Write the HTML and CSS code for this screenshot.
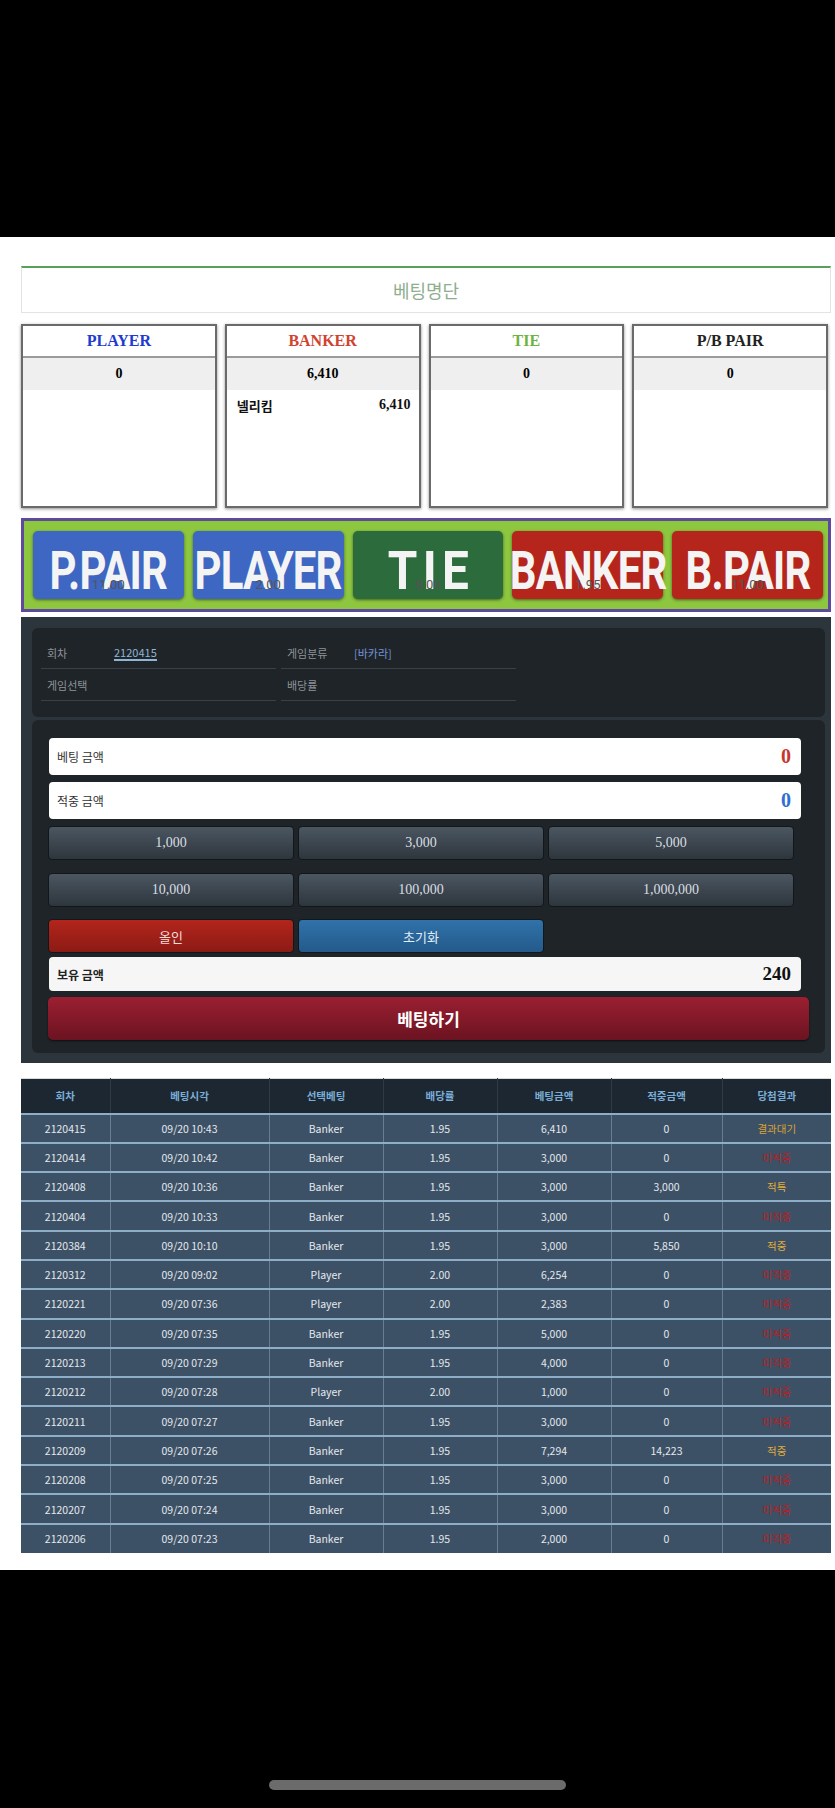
FILE: index.html
```html
<html>

<head>
  <link rel="stylesheet" href="styles.css">
</head>

<body>
  <div class="screen-top"></div>

  <div class="page">
    <div class="title-box">베팅명단</div>

    <div class="pick-boxes">
      <div class="pick-box">
        <div class="pick-head player">PLAYER</div>
        <div class="pick-total">0</div>
        <div class="pick-list"></div>
      </div>
      <div class="pick-box">
        <div class="pick-head banker">BANKER</div>
        <div class="pick-total">6,410</div>
        <div class="pick-list">
          <div class="pick-row"><span>넬리킴</span><b>6,410</b></div>
        </div>
      </div>
      <div class="pick-box">
        <div class="pick-head tie">TIE</div>
        <div class="pick-total">0</div>
        <div class="pick-list"></div>
      </div>
      <div class="pick-box">
        <div class="pick-head">P/B PAIR</div>
        <div class="pick-total">0</div>
        <div class="pick-list"></div>
      </div>
    </div>

    <div class="bet-board">
      <button class="bet-btn blue"><span class="bet-label">P.PAIR</span><span class="odds">11.00</span></button>
      <button class="bet-btn blue"><span class="bet-label">PLAYER</span><span class="odds">2.00</span></button>
      <button class="bet-btn green"><span class="bet-label tie-label">TIE</span><span class="odds">8.00</span></button>
      <button class="bet-btn red"><span class="bet-label">BANKER</span><span class="odds">1.95</span></button>
      <button class="bet-btn red"><span class="bet-label">B.PAIR</span><span class="odds">11.00</span></button>
    </div>

    <div class="bet-area">
      <div class="info-panel">
        <div class="info-grid">
          <div class="info-cell"><span class="info-label">회차</span><span class="round-no">2120415</span></div>
          <div class="info-cell"><span class="info-label">게임분류</span><span class="game-type">[바카라]</span></div>
          <div class="info-cell"><span class="info-label">게임선택</span></div>
          <div class="info-cell"><span class="info-label">배당률</span></div>
        </div>
      </div>

      <div class="slip-panel">
        <div class="amount-box">
          <span>베팅 금액</span><b class="red-num">0</b>
        </div>
        <div class="amount-box">
          <span>적중 금액</span><b class="blue-num">0</b>
        </div>
        <div class="chip-grid">
          <button class="chip">1,000</button>
          <button class="chip">3,000</button>
          <button class="chip">5,000</button>
          <button class="chip">10,000</button>
          <button class="chip">100,000</button>
          <button class="chip">1,000,000</button>
        </div>
        <div class="action-grid">
          <button class="allin">올인</button>
          <button class="reset">초기화</button>
        </div>
        <div class="amount-box balance">
          <b class="balance-label">보유 금액</b><b>240</b>
        </div>
        <button class="submit-bet">베팅하기</button>
      </div>
    </div>

    <table class="history">
      <thead>
        <tr>
          <th>회차</th>
          <th>베팅시각</th>
          <th>선택베팅</th>
          <th>배당률</th>
          <th>베팅금액</th>
          <th>적중금액</th>
          <th>당첨결과</th>
        </tr>
      </thead>
      <tbody id="historyBody"></tbody>
    </table>
  </div>

  <div class="screen-bottom">
    <div class="home-bar"></div>
  </div>

  <script>
    const history = [
      ["2120415", "09/20 10:43", "Banker", "1.95", "6,410", "0", "결과대기", "wait"],
      ["2120414", "09/20 10:42", "Banker", "1.95", "3,000", "0", "미적중", "lose"],
      ["2120408", "09/20 10:36", "Banker", "1.95", "3,000", "3,000", "적특", "win"],
      ["2120404", "09/20 10:33", "Banker", "1.95", "3,000", "0", "미적중", "lose"],
      ["2120384", "09/20 10:10", "Banker", "1.95", "3,000", "5,850", "적중", "win"],
      ["2120312", "09/20 09:02", "Player", "2.00", "6,254", "0", "미적중", "lose"],
      ["2120221", "09/20 07:36", "Player", "2.00", "2,383", "0", "미적중", "lose"],
      ["2120220", "09/20 07:35", "Banker", "1.95", "5,000", "0", "미적중", "lose"],
      ["2120213", "09/20 07:29", "Banker", "1.95", "4,000", "0", "미적중", "lose"],
      ["2120212", "09/20 07:28", "Player", "2.00", "1,000", "0", "미적중", "lose"],
      ["2120211", "09/20 07:27", "Banker", "1.95", "3,000", "0", "미적중", "lose"],
      ["2120209", "09/20 07:26", "Banker", "1.95", "7,294", "14,223", "적중", "win"],
      ["2120208", "09/20 07:25", "Banker", "1.95", "3,000", "0", "미적중", "lose"],
      ["2120207", "09/20 07:24", "Banker", "1.95", "3,000", "0", "미적중", "lose"],
      ["2120206", "09/20 07:23", "Banker", "1.95", "2,000", "0", "미적중", "lose"]
    ];

    const historyBody = document.getElementById("historyBody");
    history.forEach((item) => {
      const row = document.createElement('tr');
      row.innerHTML = `<td>${item[0]}</td>
        <td>${item[1]}</td>
        <td>${item[2]}</td>
        <td>${item[3]}</td>
        <td>${item[4]}</td>
        <td>${item[5]}</td>
        <td class="result-${item[7]}">${item[6]}</td>`;
      historyBody.appendChild(row);
    });
  </script>
</body>

</html>
```

FILE: styles.css
```css
* {
  box-sizing: border-box;
}

body {
  margin: 0;
  background-color: #000;
  font-family: "Noto Sans CJK KR", "Noto Sans", sans-serif;
}

button {
  font-family: inherit;
  cursor: pointer;
}

.screen-top {
  height: 237px;
}

.page {
  background-color: #fff;
  padding: 29px 4px 17px 21px;
}

.title-box {
  height: 47px;
  border: 1px solid #e3e3e3;
  border-top: 2px solid #5aa05a;
  display: flex;
  justify-content: center;
  align-items: center;
  color: #8fae8f;
  font-size: 18px;
}

.pick-boxes {
  margin-top: 11px;
  display: grid;
  grid-template-columns: repeat(4, minmax(0, 1fr));
  gap: 8px;
  padding-right: 3px;
}

.pick-box {
  height: 184px;
  border: 2px solid #6a6a6a;
  box-shadow: 0 1px 3px rgba(0, 0, 0, 0.45);
  background-color: #fff;
}

.pick-head {
  height: 32px;
  border-bottom: 2px solid #9a9a9a;
  display: flex;
  justify-content: center;
  align-items: center;
  font-family: "Liberation Serif", serif;
  font-weight: bold;
  font-size: 16px;
  color: #222;
}

.pick-head.player {
  color: #1d3bd1;
}

.pick-head.banker {
  color: #d0432f;
}

.pick-head.tie {
  color: #6cb33f;
}

.pick-total {
  height: 32px;
  background-color: #efefef;
  display: flex;
  justify-content: center;
  align-items: center;
  font-family: "Liberation Serif", serif;
  font-weight: bold;
  font-size: 14px;
}

.pick-list {
  padding: 5px 8px 0 10px;
}

.pick-row {
  display: flex;
  justify-content: space-between;
  align-items: center;
  height: 20px;
  font-size: 13px;
  font-weight: bold;
  color: #111;
}

.pick-row b {
  font-family: "Liberation Serif", serif;
  font-size: 14px;
}

.bet-board {
  margin-top: 10px;
  height: 94px;
  border: 3px solid #5d4a9c;
  background-color: #8dc63f;
  padding: 10px 5px 10px 9px;
  display: grid;
  grid-template-columns: repeat(5, minmax(0, 1fr));
  gap: 9px;
}

.bet-btn {
  position: relative;
  min-width: 0;
  border: none;
  border-radius: 5px;
  box-shadow: 0 1px 3px rgba(0, 0, 0, 0.5);
  display: flex;
  justify-content: center;
  align-items: flex-end;
  padding: 0 0 1px 0;
}

.bet-btn.blue {
  background-color: #3d67c2;
}

.bet-btn.green {
  background-color: #2c6b3c;
}

.bet-btn.red {
  background-color: #b6251c;
}

.bet-label {
  display: inline-block;
  font-family: Roboto, sans-serif;
  font-weight: bold;
  font-size: 53px;
  line-height: 1;
  color: #f4f4f4;
  letter-spacing: -1px;
  transform: scaleX(0.79);
  white-space: nowrap;
}

.tie-label {
  letter-spacing: 6px;
  transform: scaleX(0.9);
  margin-right: -6px;
}

.odds {
  position: absolute;
  left: 0;
  right: 0;
  bottom: 8px;
  text-align: center;
  font-family: Roboto, sans-serif;
  font-size: 13px;
  line-height: 13px;
  color: #555;
  z-index: 1;
}

.bet-area {
  margin-top: 5px;
  background-color: #2d353c;
  padding: 11px 6px 10px 11px;
}

.info-panel {
  background-color: #1f2428;
  border-radius: 6px;
  padding: 9px 0 16px 9px;
  height: 89px;
}

.info-grid {
  display: grid;
  grid-template-columns: 235px 235px;
  column-gap: 5px;
}

.info-cell {
  height: 32px;
  border-bottom: 1px solid #3a4046;
  display: flex;
  align-items: center;
  padding: 0 6px;
  font-size: 11px;
}

.info-label {
  width: 67px;
  color: #8d9399;
}

.round-no {
  color: #8fb4d4;
  border-bottom: 2px solid #8fb4d4;
  line-height: 14px;
}

.game-type {
  color: #7393d6;
}

.slip-panel {
  margin-top: 3px;
  background-color: #1f2428;
  border-radius: 6px;
  padding: 18px 16px 13px 16px;
  display: flex;
  flex-direction: column;
}

.amount-box {
  height: 37px;
  margin: 0 8px 7px 1px;
  background-color: #fff;
  border-radius: 4px;
  display: flex;
  justify-content: space-between;
  align-items: center;
  padding: 0 10px 0 8px;
  font-size: 12px;
  color: #333;
}

.amount-box b {
  font-family: "Liberation Serif", serif;
  font-size: 20px;
}

.red-num {
  color: #c7352b;
}

.blue-num {
  color: #2e6fd1;
}

.chip-grid,
.action-grid {
  display: grid;
  grid-template-columns: repeat(3, 246px);
  column-gap: 4px;
  row-gap: 13px;
}

.chip,
.allin,
.reset {
  height: 34px;
  border: 1px solid #12171b;
  border-radius: 4px;
  font-size: 14px;
}

.chip {
  background: linear-gradient(#4b5661, #2e363d);
  color: #d9dee3;
  font-family: "Liberation Serif", serif;
}

.action-grid {
  margin-top: 12px;
}

.allin {
  background: linear-gradient(#b2251c, #8c1b14);
  color: #f3dcda;
  font-size: 13px;
}

.reset {
  background: linear-gradient(#3072a9, #245a8b);
  color: #e2edf6;
  font-size: 13px;
}

.amount-box.balance {
  margin-top: 4px;
  margin-bottom: 6px;
  height: 34px;
  background-color: #f6f6f6;
}

.amount-box.balance .balance-label {
  font-family: "Noto Sans CJK KR", sans-serif;
  font-size: 12px;
  color: #222;
}

.amount-box.balance b {
  color: #111;
  font-size: 19px;
}

.submit-bet {
  height: 43px;
  border: none;
  border-radius: 5px;
  background: linear-gradient(#9b1f31, #6b1321);
  box-shadow: 0 1px 2px rgba(0, 0, 0, 0.6);
  color: #fff;
  font-size: 17px;
  font-weight: bold;
}

.history {
  margin-top: 15px;
  width: 100%;
  border-collapse: collapse;
  border-top: 1px solid #d9d9d9;
  table-layout: fixed;
}

.history th,
.history td {
  text-align: center;
  font-size: 10.5px;
  padding: 0;
}

.history th {
  height: 35px;
  background-color: #1d2731;
  color: #7aaed8;
  font-weight: bold;
  border-left: 1px solid #2f3a45;
}

.history td {
  height: 29.3px;
  background-color: #3d5166;
  color: #e3e8ed;
  border-top: 2px solid #8eaec8;
  border-left: 1px solid #687d91;
}

.history th:first-child,
.history td:first-child {
  width: 89px;
  border-left: none;
}

.history th:nth-child(2) {
  width: 159px;
}

.history th:nth-child(3),
.history th:nth-child(4),
.history th:nth-child(5) {
  width: 114px;
}

.history th:nth-child(6) {
  width: 111px;
}

.history td.result-wait {
  color: #d9a232;
}

.history td.result-lose {
  color: #b81d1f;
}

.history td.result-win {
  color: #e1ad3a;
}

.screen-bottom {
  height: 238px;
  padding-top: 210px;
}

.home-bar {
  width: 297px;
  height: 10px;
  margin: 0 auto;
  border-radius: 5px;
  background-color: #6b6b6b;
}
```
